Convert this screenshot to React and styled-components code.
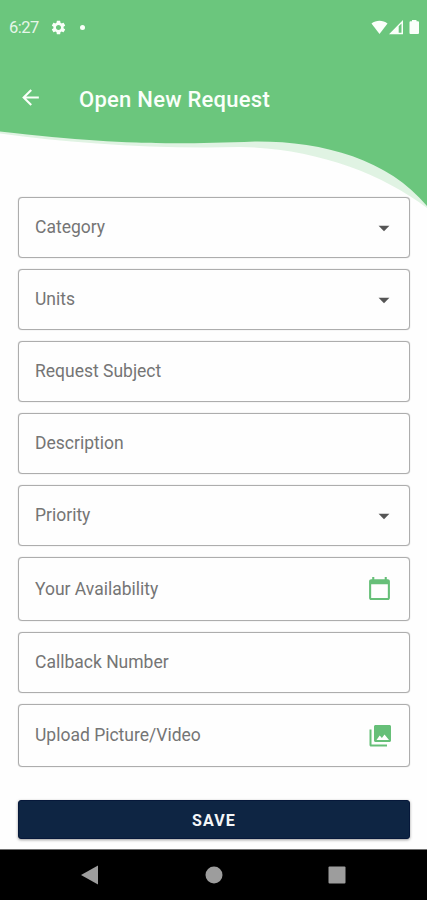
import React from 'react';
import styled, {createGlobalStyle} from "styled-components";
import {MdArrowBack, MdArrowDropDown, MdCalendarToday, MdSettings} from "react-icons/md";

const fields = [
    {label: 'Category', type: 'select', height: 61},
    {label: 'Units', type: 'select', height: 61},
    {label: 'Request Subject', height: 61},
    {label: 'Description', height: 61},
    {label: 'Priority', type: 'select', height: 61},
    {label: 'Your Availability', type: 'date', height: 64},
    {label: 'Callback Number', height: 61},
    {label: 'Upload Picture/Video', type: 'media', height: 63},
];

const GalleryIcon = () => (
    <svg width="24" height="24" viewBox="0 0 24 24" fill="currentColor">
        <path fillRule="evenodd" d="M23 16.500V2.500C23 1.600 22.300 1 21.500 1H7.500C6.700 1 6 1.600 6 2.500v14c0 .9.700 1.500 1.500 1.500h14c.8 0 1.500-.7 1.500-1.500zM8.500 16l3.200-4.600 2.200 2.700 2.600-3.600 4.500 5.500z"/>
        <path d="M1.500 5.500v15.500c0 .9.700 1.500 1.500 1.500h16v-2H3.500V5.500z"/>
    </svg>
);

const FieldIcon = ({type}) => {
    if (type === 'select') return <MdArrowDropDown className="arrow"/>;
    if (type === 'date') return <MdCalendarToday className="calendar"/>;
    if (type === 'media') return <GalleryIcon/>;
    return null;
};

const App = () => {
    return (
        <>
            <GlobalStyle/>
            <Screen>
                <Header>
                    <Wave viewBox="0 0 427 210">
                        <path fill="#e0f3e3" d="M0 0H427V208C380 172 312 148 240 147C150 149 70 143 0 133.500Z"/>
                        <path fill="#6bc67d" d="M0 0H427V206C388 159 322 141 255 141.500C160 145 110 144 0 131.500Z"/>
                    </Wave>
                    <StatusBar>
                        <Clock>6:27</Clock>
                        <MdSettings className="settings"/>
                        <Dot/>
                        <StatusIcons viewBox="0 0 49 16">
                            <path d="M0.500 3.600C5 -.2 12 -.2 16.500 3.600L8.500 14Z"/>
                            <path fillRule="evenodd" d="M18 14.200L32 0V14.200ZM27.700 6.300V12.700H30.500V3.500Z"/>
                            <path d="M41 1.300V0h4.500v1.300H47q1 0 1 1V13q0 1-1 1h-7.500q-1 0-1-1V2.300q0-1 1-1Z"/>
                        </StatusIcons>
                    </StatusBar>
                    <TitleBar>
                        <BackButton aria-label="Back"><MdArrowBack/></BackButton>
                        <Title>Open New Request</Title>
                    </TitleBar>
                </Header>

                <Form>
                    {fields.map(({label, type, height}) => (
                        <Field key={label} $height={height}>
                            <Label>{label}</Label>
                            <FieldIcon type={type}/>
                        </Field>
                    ))}
                    <SaveButton>SAVE</SaveButton>
                </Form>

                <NavBar>
                    <svg width="18" height="20" viewBox="0 0 18 20"><path d="M0 10L17 0.500V19.500Z"/></svg>
                    <svg width="18" height="18" viewBox="0 0 18 18"><circle cx="9" cy="9" r="8.500"/></svg>
                    <svg width="18" height="18" viewBox="0 0 18 18"><rect x="0.500" y="0.500" width="17" height="17" rx="1"/></svg>
                </NavBar>
            </Screen>
        </>
    );
};

const GlobalStyle = createGlobalStyle`
* {
  box-sizing: border-box;
}

body {
  margin: 0;
  background: #fff;
  font-family: Roboto, "Liberation Sans", sans-serif;
}
`;

const Screen = styled.div`
display: flex;
flex-direction: column;
width: 427px;
height: 900px;
overflow: hidden;
background: #fefefe;
`;

const Header = styled.header`
position: relative;
height: 197px;
flex-shrink: 0;
color: #fafffa;
`;

// curved background behind the status and title bars
const Wave = styled.svg`
position: absolute;
top: 0;
left: 0;
width: 427px;
height: 210px;
`;

const StatusBar = styled.div`
position: relative;
display: flex;
align-items: center;
height: 54px;
padding: 0 7px 0 9px;

.settings{
  width: 17px;
  height: 17px;
  margin-left: 11px;
}
`;

const Clock = styled.span`
width: 30px;
color: #e6f6e9;
font-size: 16.5px;
line-height: 20px;
letter-spacing: -0.5px;
padding-top: 2px;
`;

const Dot = styled.span`
width: 5px;
height: 5px;
margin-left: 13px;
border-radius: 50%;
background: currentColor;
`;

const StatusIcons = styled.svg`
width: 49px;
height: 16px;
margin-left: auto;
margin-top: 2px;
fill: currentColor;
`;

const TitleBar = styled.div`
position: relative;
display: flex;
align-items: center;
height: 88px;
padding-left: 18px;
`;

const BackButton = styled.button`
display: flex;
margin-top: -1px;
padding: 0;
border: 0;
background: none;
color: inherit;
font-size: 25px;
`;

const Title = styled.h1`
margin: 4px 0 0 36px;
font-size: 22px;
font-weight: 500;
line-height: 28px;
letter-spacing: 0.25px;
`;

const Form = styled.main`
position: relative;
display: flex;
flex-direction: column;
gap: 11px;
flex: 1;
padding: 0 17px 0 18px;
`;

const Field = styled.div`
display: flex;
align-items: center;
justify-content: space-between;
height: ${({$height}) => $height}px;
padding: 0 17px 0 16px;
border: 1px solid #adadad;
border-radius: 4px;
box-shadow: 0 0 1px #b0b0b0;
background: #fefefe;
color: #66bf78;

.arrow{
  width: 26px;
  height: 26px;
  margin-right: -5px;
  color: #555;
}

.calendar{
  width: 25px;
  height: 25px;
  margin-top: -2px;
}
`;

const Label = styled.span`
color: #757575;
font-size: 17.5px;
line-height: 24px;
letter-spacing: 0;
margin-top: -1px;
`;

const SaveButton = styled.button`
height: 39px;
margin-top: 22px;
padding-top: 3px;
border: 1px solid #06183a;
border-radius: 3px;
background: #0e2543;
box-shadow: 0 1px 3px rgba(0, 0, 0, 0.4);
color: #f4f6f8;
font: 700 16px Roboto, "Liberation Sans", sans-serif;
letter-spacing: 1.1px;
`;

const NavBar = styled.nav`
display: flex;
align-items: center;
justify-content: space-between;
height: 51px;
padding: 0 81px;
border-top: 1px solid #707070;
background: #000;
fill: #9d9d9d;
`;

export default App;
